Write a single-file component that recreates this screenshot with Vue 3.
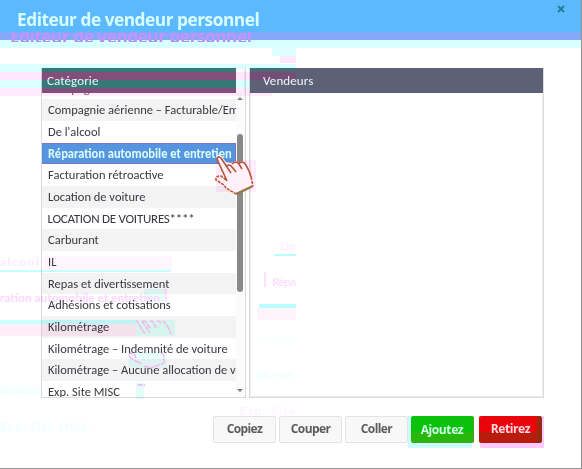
<template>
  <div class="dialog">
    <header class="titlebar">
      <h1><span>Editeur de vendeur personnel</span></h1>
      <button class="close" aria-label="Fermer">
        <svg width="8" height="8" viewBox="0 0 8 8"><path d="M1 1l6 6M7 1L1 7" /></svg>
      </button>
      <span class="title-echo" aria-hidden="true">Editeur de vendeur personnel</span>
    </header>

    <main class="panels">
      <section class="panel categories">
        <div class="panel-head striped"><span>Catégorie</span></div>
        <div class="list-area">
          <ul>
            <li v-for="(c, i) in categories" :key="i" :class="{ selected: i === 3, caps: i === 6 }">
              <span>{{ c }}</span>
            </li>
          </ul>
          <div class="scrollbar">
            <i class="arrow up" />
            <i class="thumb" />
            <i class="arrow down" />
          </div>
        </div>
      </section>
      <section class="panel vendors">
        <div class="panel-head"><span>Vendeurs</span></div>
      </section>
    </main>

    <footer class="actions">
      <button v-for="b in buttons" :key="b.label" :class="b.kind"><span>{{ b.label }}</span></button>
    </footer>

    <svg class="overlay tints" width="582" height="469" viewBox="0 0 582 469" aria-hidden="true">
      <rect v-for="(t, i) in tints" :key="i" :x="t[0]" :y="t[1]" :width="t[2]" :height="t[3]" :fill="t[4]" />
      <g class="ghost-text">
        <text v-for="(g, i) in ghosts" :key="i" :x="g[0]" :y="g[1]" :fill="g[2]" :textLength="g[4]">{{ g[3] }}</text>
      </g>
    </svg>

    <svg class="overlay" width="582" height="469" viewBox="0 0 582 469" aria-hidden="true">
      <path class="ghost-hand" d="M136 320l9 14M142 321l8 12M143 321q3-1 4 3l3 4M150 321q3-1 4 3l2 4M157 321q3-1 4 3M163 321q5 4 8 13M136 358q-1-5-5-5-4 1 0 5l6 4M137 361l4 3M144 366l7 2 13-5M164 363v-6l-2-5M138 385h7" />
      <g class="hand">
        <path class="fill" d="M217 157l8 22-4-3q-5 0-5 4l7 5q2 3 13 9l17-8-2-13q-3-9-8-12l-4 1-4-1-4 2-5-1-5-6-2-2z" />
        <path class="outline" d="M227 181l-10-22q1-4 4-1l10 15M226 167q3-4 6 0l4 5M232 164q4-4 7 0l3 5M239 163q5-3 8 4 3 5 4 10" />
        <path class="outline dashed" d="M226 180l-5-4q-6 0-5 4l8 5 2 3 10 6M251 177l2 9" />
        <path class="outline base" d="M236 194l17-8" />
      </g>
    </svg>
  </div>
</template>

<script setup>
const categories = [
  'Compagnie aérienne',
  'Compagnie aérienne – Facturable/Employé',
  "De l'alcool",
  'Réparation automobile et entretien',
  'Facturation rétroactive',
  'Location de voiture',
  'LOCATION DE VOITURES****',
  'Carburant',
  'IL',
  'Repas et divertissement',
  'Adhésions et cotisations',
  'Kilométrage',
  'Kilométrage – Indemnité de voiture',
  'Kilométrage – Aucune allocation de voiture',
  'Exp. Site MISC',
]

const buttons = [
  { label: 'Copiez', kind: 'plain' },
  { label: 'Couper', kind: 'plain' },
  { label: 'Coller', kind: 'plain' },
  { label: 'Ajoutez', kind: 'add' },
  { label: 'Retirez', kind: 'remove' },
]

// x, y, width, height, colour
const tints = [
  [0, 40, 582, 8, '#d9ffff'],
  [272, 48, 24, 8, '#ddffff'],
  [280, 56, 16, 7, '#ffe8fd'],
  [0, 64, 296, 4, '#dcffff'],
  [0, 68, 42, 4, '#dcffff'],
  [0, 72, 42, 8, '#ffe8fb'],
  [0, 80, 42, 8, '#dcffff'],
  [0, 88, 42, 8, '#ffebfb'],
  [236, 72, 14, 8, '#ffe8fb'],
  [236, 80, 14, 8, '#dcffff'],
  [236, 88, 14, 8, '#ffebfb'],
  [43, 93, 229, 3, '#ffebfb'],
  [216, 160, 40, 32, '#ffecfc'],
  [0, 270, 171, 2, '#c5ffff'],
  [43, 256, 129, 14, '#fff5fc'],
  [164, 289, 3, 12, '#ffe4ff'],
  [144, 289, 20, 12, '#e5fffa'],
  [0, 320, 136, 4, '#c8ffff'],
  [0, 324, 136, 12, '#ffeef8'],
  [136, 320, 39, 16, '#e2fff9'],
  [128, 352, 39, 16, '#e9fffc'],
  [136, 383, 8, 16, '#e2fff9'],
  [274, 254, 22, 2, '#b9ffff'],
  [264, 272, 2, 15, '#ffdfff'],
  [259, 304, 37, 4, '#b9ffff'],
  [257, 308, 39, 12, '#fff3fc'],
  [408, 416, 3, 32, '#caffff'],
  [411, 443, 61, 5, '#caffff'],
  [480, 443, 64, 5, '#ffcaff'],
  [542, 416, 2, 27, '#ffcaff'],
]

const ghosts = [
  [0, 266, '#ffe8ff', 'alcool', 39],
  [0, 302, '#ffd6ff', 'ration automobile et entretien', 160],
  [280, 250, '#fff0ff', 'De', 16],
  [272, 286, '#ffdfff', 'Répa', 24],
  [0, 394, '#eeffff', 'lométrage', 42],
  [0, 431, '#eeffff', 'Exp. Site MISC', 90],
  [239, 415, '#fff3ff', 'Exp. Site', 56],
  [256, 343, '#f6ffff', 'Location', 39],
  [255, 378, '#f4ffff', 'Kilométr', 40],
]
</script>

<style>
body { margin: 0; overflow: hidden; }
</style>

<style scoped>
* { box-sizing: border-box; }

.dialog {
  position: relative;
  width: 582px;
  height: 469px;
  overflow: hidden;
  border-right: 1px solid #929292;
  border-bottom: 1px solid #959595;
  background: #fff;
  font-family: Carlito, Lato, sans-serif;
  color: #383840;
}

.titlebar {
  position: relative;
  display: flex;
  justify-content: space-between;
  height: 68px;
  padding: 0 16px 0 17px;
  background: linear-gradient(#5cb9ff 0 32px, #84a8fa 32px 40px, transparent 40px);
}

h1 {
  margin: 8px 0 0;
  font: 700 18px/22px "Open Sans", sans-serif;
  letter-spacing: -0.5px;
  color: #d7ffff;
  white-space: nowrap;
}

h1 span {
  display: inline-block;
  transform: scaleX(0.96);
  transform-origin: left;
}

.title-echo {
  position: absolute;
  top: 32px;
  left: 10px;
  height: 10px;
  overflow: hidden;
  font: 700 18px/8px "Open Sans", sans-serif;
  letter-spacing: -0.5px;
  color: #c693f7;
  white-space: nowrap;
  transform: scaleX(0.957);
  transform-origin: left;
}

.close {
  width: 8px;
  height: 8px;
  margin-top: 5px;
  padding: 0;
  border: 0;
  background: none;
}

.close svg { display: block; }
.close path { fill: none; stroke: #247d91; stroke-width: 1.8; }

.panels {
  display: grid;
  grid-template-columns: 205px 295px;
  gap: 3px;
  height: 330px;
  margin-left: 41px;
}

.panel {
  min-width: 0;
  border: 1px solid #dadada;
  border-top: 0;
  box-shadow: inset 0 0 0 1px #eee;
}

.panel-head {
  height: 25px;
  padding-left: 13px;
  background: #5c6177;
  color: #edf4fa;
  font-size: 13px;
  line-height: 25px;
  letter-spacing: 0.1px;
}

.vendors .panel-head {
  background:
    linear-gradient(#367778 0 2px, #5c6177 2px 4px, #734f78 4px 12px, #5c6177 12px) 0 0 / 46px 100% no-repeat,
    #5c6177;
}

.striped {
  width: 194px;
  padding-left: 5px;
  background: linear-gradient(#367778 0 4px, #80507a 4px 12px, #367778 12px 20px, #80507a 20px);
}

.list-area {
  display: flex;
  height: 304px;
  overflow: hidden;
}

ul {
  flex: 0 0 194px;
  height: 304px;
  margin: 0;
  padding: 0;
  overflow: hidden;
  list-style: none;
}

li {
  height: 21.7px;
  padding-left: 5.5px;
  overflow: hidden;
  background: #fff;
  font-size: 13px;
  line-height: 22px;
  white-space: nowrap;
}

li span {
  display: inline-block;
  transform: scaleX(0.96);
  transform-origin: left;
}

li.caps span { transform: none; letter-spacing: -0.25px; }

li:first-child { margin-top: -15.5px; color: #8e5361; }
li:nth-child(even) { background: #f3f3f3; }

li.selected {
  border: 1px solid #8272cf;
  border-left-width: 0;
  background: #5794df;
  color: #d9ffff;
  font-weight: 700;
  line-height: 20px;
}

.scrollbar {
  display: flex;
  flex: 1;
  flex-direction: column;
  align-items: center;
  padding: 4px 1px 5px 0;
  background: #fbfbfb;
}

.arrow {
  width: 0;
  height: 0;
  border: 3px solid transparent;
}

.up { border-top: 0; border-bottom-color: #858585; }
.down { margin-top: auto; border-bottom: 0; border-top-color: #777; }

.thumb {
  width: 6px;
  height: 158px;
  margin-top: 34px;
  border-radius: 3px;
  background: #898989;
}

.actions {
  display: flex;
  gap: 3px;
  margin: 18px 0 0 213px;
}

.actions button {
  width: 63px;
  height: 27px;
  padding: 0;
  border: 1px solid #e3e3e3;
  border-radius: 2px;
  background: #f8f8f8;
  color: #5c5c5c;
  font: 700 12px/23px "Open Sans", sans-serif;
  letter-spacing: -0.6px;
}

.actions button span { position: relative; top: -1px; }

.actions .add {
  border-color: #539d18;
  border-width: 0 1px 1px 0;
  background: linear-gradient(#0ac10c 0 16px, #28b70c 16px);
  color: #ceffe4;
  letter-spacing: -0.4px;
}

.actions .add span { top: 0; }

.actions .remove {
  margin-left: 2px;
  border: 0;
  background: linear-gradient(#e9050b 0 16px, #b81c0c 16px) 0 0 / 58px 100% no-repeat, #922c0c;
  color: #ffd9e1;
  letter-spacing: -0.4px;
}

.overlay {
  position: absolute;
  top: 0;
  left: 0;
}

.tints { mix-blend-mode: multiply; }
.ghost-text { font: 700 12px Lato, sans-serif; }
.ghost-hand { fill: none; stroke: #ffa8ed; stroke-width: 1.3; stroke-dasharray: 5 1; }
.hand .fill { fill: #fff0fa; }
.outline { fill: none; stroke: #b55338; stroke-width: 1.6; }
.dashed { stroke: #c3512d; stroke-dasharray: 3 1; }
.base { stroke: #927744; stroke-width: 2; }
</style>
